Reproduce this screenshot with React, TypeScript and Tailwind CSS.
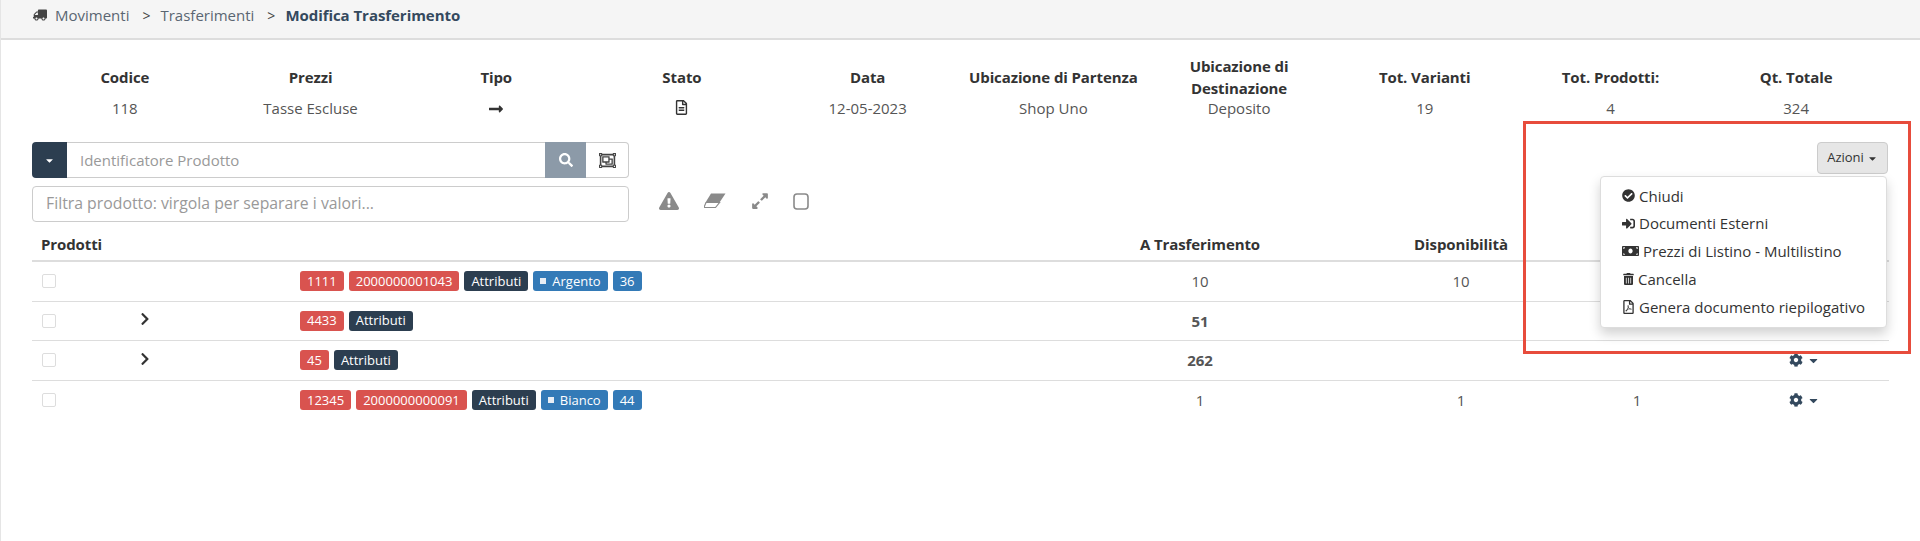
import React from "react";
import { FaTruck, FaLongArrowAltRight, FaRegFileAlt, FaSearch, FaRegObjectGroup, FaExclamationTriangle, FaExpandAlt, FaChevronRight, FaCog, FaCaretDown, FaCheckCircle, FaSignInAlt, FaMoneyBill, FaTrashAlt, FaRegFilePdf } from "react-icons/fa";

const info: [string, React.ReactNode][] = [
  ["Codice", "118"],
  ["Prezzi", "Tasse Escluse"],
  ["Tipo", <FaLongArrowAltRight className="mx-auto mt-[4px] text-[#333] text-[16px]" />],
  ["Stato", <FaRegFileAlt className="mx-auto mt-[3px] text-[#333] text-[15px]" />],
  ["Data", "12-05-2023"],
  ["Ubicazione di Partenza", "Shop Uno"],
  ["Ubicazione di Destinazione", "Deposito"],
  ["Tot. Varianti", "19"],
  ["Tot. Prodotti:", "4"],
  ["Qt. Totale", "324"],
];

function Tag({ c, sq, children }: { c: "r" | "d" | "b"; sq?: boolean; children: React.ReactNode }) {
  const bg = c === "r" ? "bg-[#d9534f]" : c === "d" ? "bg-[#2c3e50]" : "bg-[#337ab7]";
  return (
    <span className={`${bg} inline-flex h-[20px] items-center rounded-[3px] px-[7px] text-[13px] text-white whitespace-nowrap`}>
      {sq && <span className="mr-[6px] h-[6px] w-[6px] bg-[#e8eef5]" />}
      {children}
    </span>
  );
}

const rows = [
  { chev: false, tags: [["r", "1111"], ["r", "2000000001043"], ["d", "Attributi"], ["b", "Argento", "s"], ["b", "36"]], a: "10", bold: false, d: "10", e: "", gear: false },
  { chev: true, tags: [["r", "4433"], ["d", "Attributi"]], a: "51", bold: true, d: "", e: "", gear: false },
  { chev: true, tags: [["r", "45"], ["d", "Attributi"]], a: "262", bold: true, d: "", e: "", gear: true },
  { chev: false, tags: [["r", "12345"], ["r", "2000000000091"], ["d", "Attributi"], ["b", "Bianco", "s"], ["b", "44"]], a: "1", bold: false, d: "1", e: "1", gear: true },
];

const grid = "grid grid-cols-[67px_201px_700px_400px_122px_230px_110px_27px] items-center";

const menu: [React.ReactNode, string][] = [
  [<FaCheckCircle className="w-[13px] text-[13px] text-[#333]" />, "Chiudi"],
  [<FaSignInAlt className="w-[13px] text-[13px] text-[#333]" />, "Documenti Esterni"],
  [<FaMoneyBill className="w-[17px] text-[16px] text-[#333]" />, "Prezzi di Listino - Multilistino"],
  [<FaTrashAlt className="ml-[1px] w-[11px] text-[12px] text-[#333]" />, "Cancella"],
  [<FaRegFilePdf className="w-[13px] text-[14px] text-[#333]" />, "Genera documento riepilogativo"],
];

export default function App() {
  return (
    <div className="relative h-[541px] overflow-hidden bg-white border-l border-[#e5e5e5] font-['Open_Sans',sans-serif] text-[15px] text-[#555]">
      <div className="flex h-[40px] items-start border-b-2 border-[#ddd] bg-[#f5f5f5] pl-[32px] pt-[5px] leading-[21px]">
        <FaTruck className="mt-[3px] -scale-x-100 text-[14px] text-[#444]" />
        <span className="ml-[8px] text-[#5a6672]">Movimenti</span>
        <span className="ml-[13px] text-[#444] text-[14px]">&gt;</span>
        <span className="ml-[10px] text-[#5a6672]">Trasferimenti</span>
        <span className="ml-[13px] text-[#444] text-[14px]">&gt;</span>
        <span className="ml-[10px] font-bold tracking-[-0.05px] text-[#34495e]">Modifica Trasferimento</span>
      </div>

      <div className="mx-[31px] mt-[15px] grid h-[76px] grid-cols-10">
        {info.map(([t, v]) => (
          <div key={t} className="flex flex-col items-center text-center">
            <div className="flex h-[44px] w-[170px] items-center justify-center font-bold leading-[22px] text-[#333] tracking-[-0.1px]">{t}</div>
            <div className="-mt-[2px] h-[22px] leading-[22px]">{v}</div>
          </div>
        ))}
      </div>

      <div className="ml-[31px] mt-[11px] flex h-[36px] w-[597px]">
        <div className="flex w-[35px] items-center justify-center rounded-l-[4px] bg-[#2c3e50] text-white"><FaCaretDown className="text-[11px]" /></div>
        <div className="flex flex-1 items-center border-y border-[#ccc] px-[13px] text-[#999]">Identificatore Prodotto</div>
        <div className="flex w-[41px] items-center justify-center bg-[#8c9aa8] text-white"><FaSearch className="text-[14px]" /></div>
        <div className="flex w-[43px] items-center justify-center rounded-r-[4px] border border-l-0 border-[#ccc] text-[#444]"><FaRegObjectGroup className="text-[17px]" /></div>
      </div>

      <div className="ml-[31px] mt-[8px] flex items-center">
        <div className="flex h-[36px] w-[597px] items-center rounded-[4px] border border-[#ccc] px-[13px] text-[15.8px] text-[#999]">Filtra prodotto: virgola per separare i valori...</div>
        <div className="ml-[30px] -mt-[6px] flex items-center text-[#8a8a8a]">
          <FaExclamationTriangle className="text-[20px]" />
          <svg width="22" height="16" viewBox="0 0 22 16" className="ml-[25px]" fill="none">
            <path d="M7 0.5H21.5L15.5 9.5H1.5Z" fill="#8a8a8a" />
            <path d="M2 9.5H15.5L11.5 14.5H1Q0 14.5 0.5 13Z" fill="#fff" stroke="#8a8a8a" strokeWidth="1.2" />
          </svg>
          <FaExpandAlt className="ml-[25px] text-[18px]" />
          <svg width="16" height="17" viewBox="0 0 16 17" className="ml-[24px]" fill="none">
            <rect x="1" y="1" width="14" height="15" rx="3" stroke="#8a8a8a" strokeWidth="1.6" />
          </svg>
        </div>
      </div>

      <div className="ml-[31px] mt-[6px] w-[1857px]">
        <div className={`${grid} h-[34px] border-b-2 border-[#ddd] font-bold text-[#333] tracking-[-0.1px]`}>
          <div className="col-span-3 pl-[9px]">Prodotti</div>
          <div className="text-center">A Trasferimento</div>
          <div className="text-center">Disponibilità</div>
        </div>
        {rows.map((r, i) => (
          <div key={i} className={`${grid} h-[39.5px] ${i < rows.length - 1 ? "border-b border-[#ddd]" : ""}`}>
            <div className="pl-[10px]"><div className="h-[14px] w-[14px] rounded-[2px] border border-[#ddd]" /></div>
            <div>{r.chev && <FaChevronRight className="ml-[39px] -mt-[3px] text-[14px] text-[#333]" />}</div>
            <div className="flex gap-[5px]">
              {r.tags.map(([c, t, s], j) => <Tag key={j} c={c as "r" | "d" | "b"} sq={!!s}>{t}</Tag>)}
            </div>
            <div className={`text-center ${r.bold ? "font-bold" : ""}`}>{r.a}</div>
            <div className="text-center">{r.d}</div>
            <div className="text-center">{r.e}</div>
            <div className="mr-[6px] flex items-center justify-center gap-[4px] text-[#34495e]">{r.gear && <><FaCog className="text-[14px]" /><FaCaretDown className="text-[13px]" /></>}</div>
          </div>
        ))}
      </div>

      <div className="absolute left-[1522px] top-[121px] h-[233px] w-[388px] border-[3px] border-[#e74c3c]" />
      <div className="absolute left-[1816px] top-[142px] flex h-[32px] w-[71px] items-center justify-center gap-[3px] rounded-[4px] border border-[#ccc] bg-[#e6e6e6] text-[13px] text-[#333]">Azioni<FaCaretDown className="text-[11px]" /></div>
      <div className="absolute left-[1599px] top-[176px] h-[152px] w-[287px] rounded-[4px] border border-[#ddd] bg-white pt-[5px] shadow-[0_6px_12px_rgba(0,0,0,0.18)]">
        {menu.map(([ic, t]) => (
          <div key={t} className="flex h-[27.8px] items-center pl-[21px] text-[15px] text-[#333]">{ic}<span className="ml-[4px]">{t}</span></div>
        ))}
      </div>
    </div>
  );
}
